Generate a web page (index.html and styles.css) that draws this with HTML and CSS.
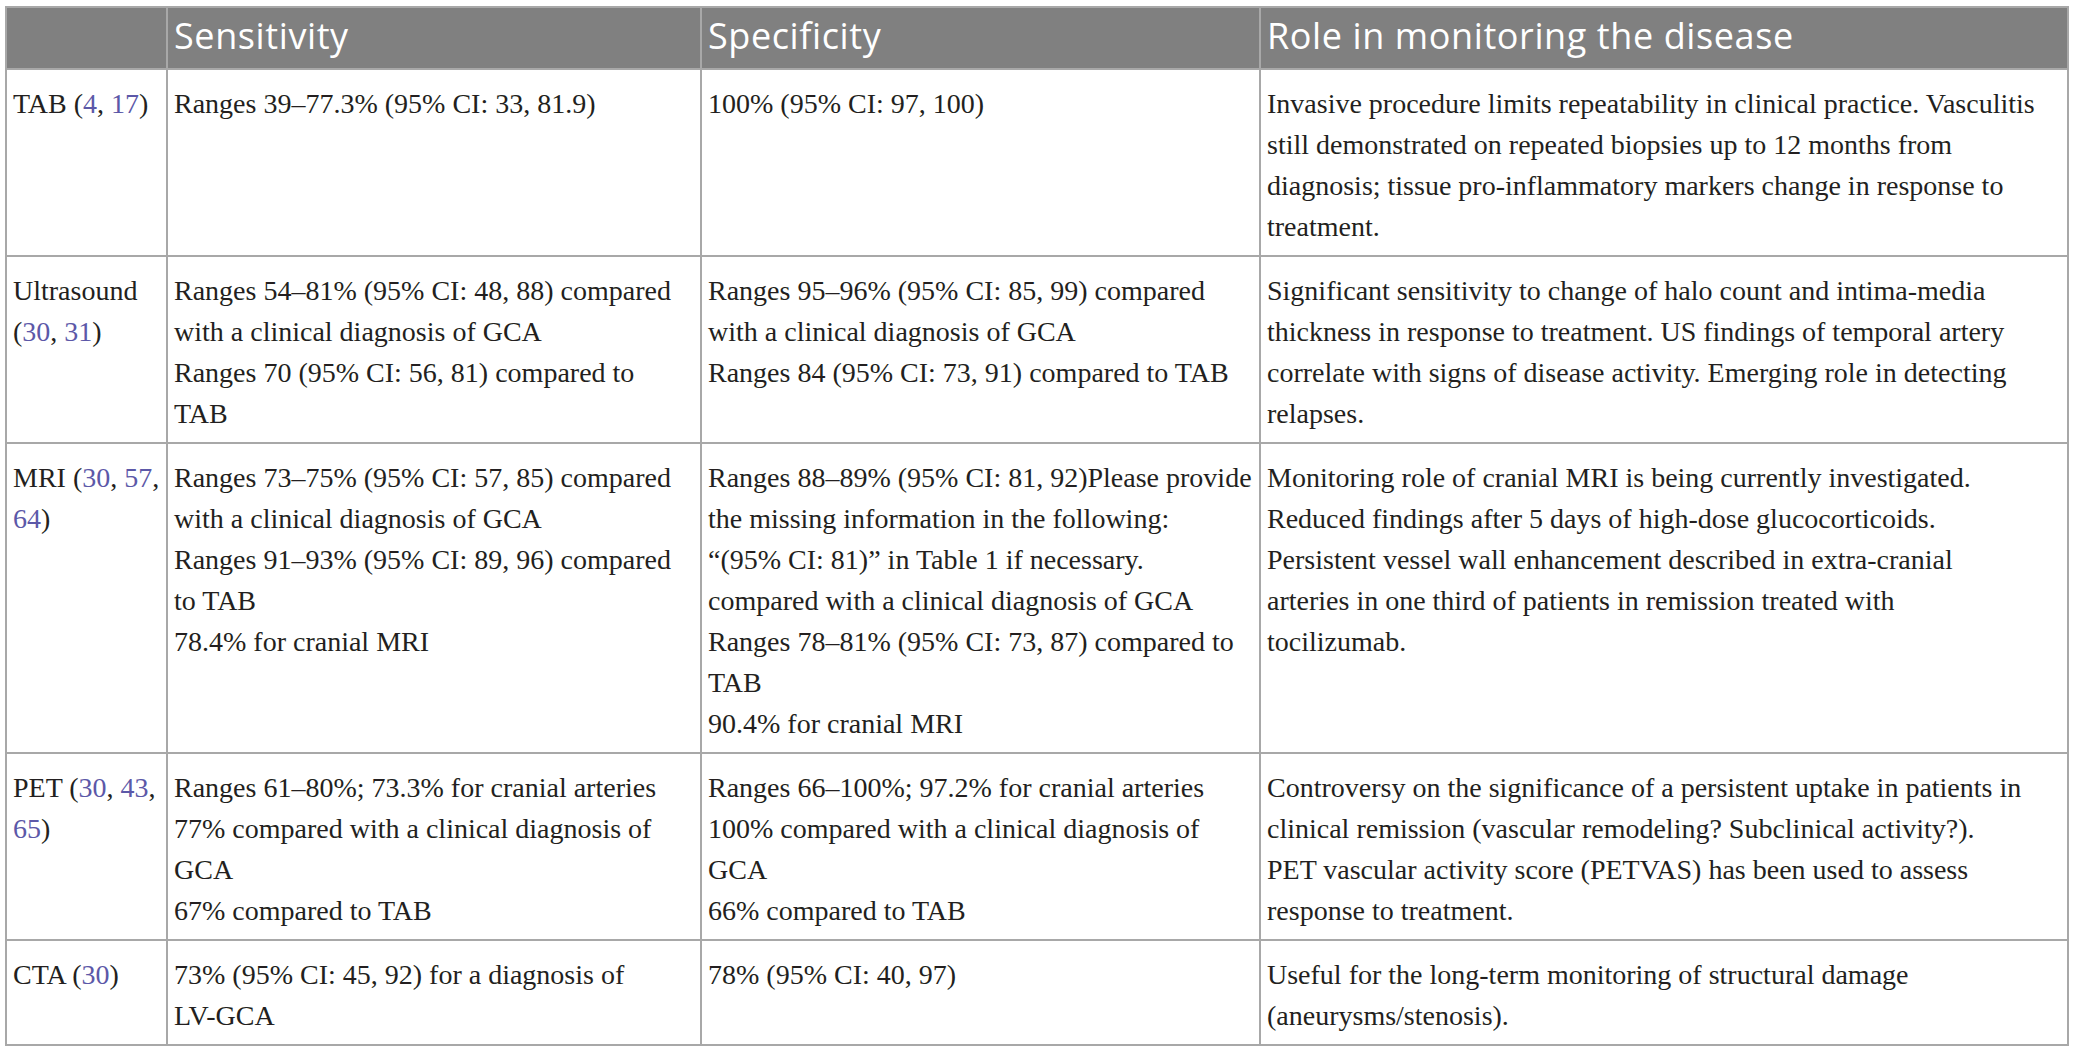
FILE: index.html
```html
<!DOCTYPE html>
<html lang="en">
<head>
    <meta charset="UTF-8">
    <meta name="viewport" content="width=device-width, initial-scale=1.0">
    <title>Table 1 - Imaging in GCA</title>
    <link rel="stylesheet" href="styles.css">
</head>
<body>
    <table class="data-table">
        <colgroup>
            <col class="col-test">
            <col class="col-sens">
            <col class="col-spec">
            <col class="col-role">
        </colgroup>
        <thead>
            <tr>
                <th></th>
                <th>Sensitivity</th>
                <th>Specificity</th>
                <th>Role in monitoring the disease</th>
            </tr>
        </thead>
        <tbody>
            <tr>
                <td>TAB (<a class="ref" href="#">4</a>, <a class="ref" href="#">17</a>)</td>
                <td>Ranges 39–77.3% (95% CI: 33, 81.9)</td>
                <td>100% (95% CI: 97, 100)</td>
                <td>Invasive procedure limits repeatability in clinical practice. Vasculitis<br>
                    still demonstrated on repeated biopsies up to 12 months from<br>
                    diagnosis; tissue pro-inflammatory markers change in response to<br>
                    treatment.</td>
            </tr>
            <tr>
                <td>Ultrasound<br>(<a class="ref" href="#">30</a>, <a class="ref" href="#">31</a>)</td>
                <td>Ranges 54–81% (95% CI: 48, 88) compared<br>
                    with a clinical diagnosis of GCA<br>
                    Ranges 70 (95% CI: 56, 81) compared to<br>
                    TAB</td>
                <td>Ranges 95–96% (95% CI: 85, 99) compared<br>
                    with a clinical diagnosis of GCA<br>
                    Ranges 84 (95% CI: 73, 91) compared to TAB</td>
                <td>Significant sensitivity to change of halo count and intima-media<br>
                    thickness in response to treatment. US findings of temporal artery<br>
                    correlate with signs of disease activity. Emerging role in detecting<br>
                    relapses.</td>
            </tr>
            <tr>
                <td>MRI (<a class="ref" href="#">30</a>, <a class="ref" href="#">57</a>,<br><a class="ref" href="#">64</a>)</td>
                <td>Ranges 73–75% (95% CI: 57, 85) compared<br>
                    with a clinical diagnosis of GCA<br>
                    Ranges 91–93% (95% CI: 89, 96) compared<br>
                    to TAB<br>
                    78.4% for cranial MRI</td>
                <td>Ranges 88–89% (95% CI: 81, 92)Please provide<br>
                    the missing information in the following:<br>
                    “(95% CI: 81)” in Table 1 if necessary.<br>
                    compared with a clinical diagnosis of GCA<br>
                    Ranges 78–81% (95% CI: 73, 87) compared to<br>
                    TAB<br>
                    90.4% for cranial MRI</td>
                <td>Monitoring role of cranial MRI is being currently investigated.<br>
                    Reduced findings after 5 days of high-dose glucocorticoids.<br>
                    Persistent vessel wall enhancement described in extra-cranial<br>
                    arteries in one third of patients in remission treated with<br>
                    tocilizumab.</td>
            </tr>
            <tr>
                <td>PET (<a class="ref" href="#">30</a>, <a class="ref" href="#">43</a>,<br><a class="ref" href="#">65</a>)</td>
                <td>Ranges 61–80%; 73.3% for cranial arteries<br>
                    77% compared with a clinical diagnosis of<br>
                    GCA<br>
                    67% compared to TAB</td>
                <td>Ranges 66–100%; 97.2% for cranial arteries<br>
                    100% compared with a clinical diagnosis of<br>
                    GCA<br>
                    66% compared to TAB</td>
                <td>Controversy on the significance of a persistent uptake in patients in<br>
                    clinical remission (vascular remodeling? Subclinical activity?).<br>
                    PET vascular activity score (PETVAS) has been used to assess<br>
                    response to treatment.</td>
            </tr>
            <tr>
                <td>CTA (<a class="ref" href="#">30</a>)</td>
                <td>73% (95% CI: 45, 92) for a diagnosis of<br>
                    LV-GCA</td>
                <td>78% (95% CI: 40, 97)</td>
                <td>Useful for the long-term monitoring of structural damage<br>
                    (aneurysms/stenosis).</td>
            </tr>
        </tbody>
    </table>
</body>
</html>
```

FILE: styles.css
```css
/* Comparison table of imaging tests */
body {
    margin: 0;
    padding: 6px 0 0 5px;
    background-color: #fff;
    color: #231f20;
}

.data-table {
    width: 2062px;
    table-layout: fixed;
    border-collapse: collapse;
    border: 2px solid #a8a8a8;
}

.col-test { width: 161px; }
.col-sens { width: 534px; }
.col-spec { width: 559px; }
.col-role { width: 808px; }

.data-table th,
.data-table td {
    border: 2px solid #a8a8a8;
    text-align: left;
    vertical-align: top;
    white-space: nowrap;
}

.data-table th {
    background-color: #808080;
    color: #fff;
    font-family: "Open Sans", "Noto Sans", sans-serif;
    font-weight: 400;
    font-size: 36px;
    letter-spacing: 0.6px;
    line-height: 44px;
    padding: 6px 6px 10px;
}

.data-table td {
    font-family: "Liberation Serif", "Times New Roman", serif;
    font-size: 28px;
    line-height: 41px;
    padding: 13px 6px 8px;
}

.ref {
    color: #5c58a8;
    text-decoration: none;
}
```
